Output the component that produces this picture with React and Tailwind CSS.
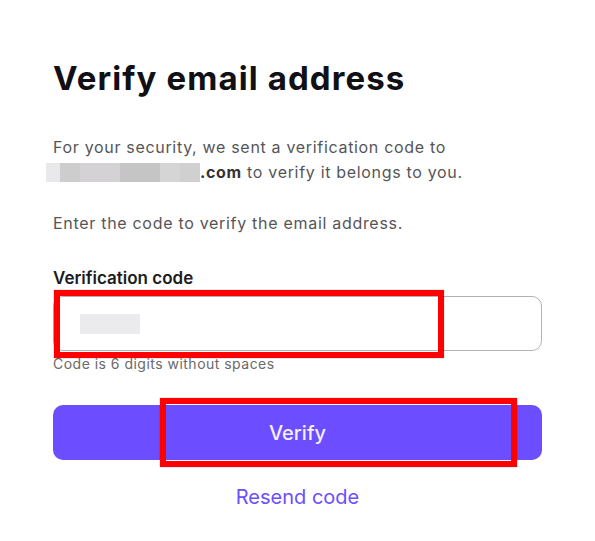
import React from "react";

export default function App() {
  return (
    <div
      className="relative w-[595px] h-[541px] bg-white overflow-hidden"
      style={{ fontFamily: "Inter, 'Liberation Sans', sans-serif" }}
    >
      <div className="flex flex-col px-[53px] pt-[59px]">
        <h1 className="text-[33px] leading-[38px] font-bold text-[#101015] tracking-[1.1px]">
          Verify email address
        </h1>

        <p className="mt-[38px] text-[16px] leading-[25px] text-[#555558] tracking-[0.68px]">
          For your security, we sent a verification code to
          <br />
          <span className="relative inline-flex align-middle -ml-[7px] h-[19px] -mt-[3px]">
            <span className="w-[14px] h-full bg-[#e9e9eb]" />
            <span className="w-[20px] h-full bg-[#cdcdcd]" />
            <span className="w-[40px] h-full bg-[#d4d2d4]" />
            <span className="w-[40px] h-full bg-[#c5c5c5]" />
            <span className="w-[20px] h-full bg-[#d5d5d5]" />
            <span className="w-[20px] h-full bg-[#d0d0d0]" />
          </span>
          <span className="font-bold text-[#333333]">.com</span> to verify it belongs to you.
        </p>

        <p className="mt-[26px] text-[16px] leading-[25px] text-[#555558] tracking-[0.7px]">
          Enter the code to verify the email address.
        </p>

        <label className="mt-[30px] text-[17px] leading-[24px] font-semibold text-[#1c1c1c]">
          Verification code
        </label>

        <div className="mt-[6px] h-[55px] rounded-[10px] border border-[#b3b3b3] flex items-center pl-[26px]">
          <div className="w-[60px] h-[20px] bg-[#ebebed]" />
        </div>

        <p className="mt-[3px] text-[14px] leading-[20px] text-[#6a6a6a] tracking-[0.48px]">
          Code is 6 digits without spaces
        </p>

        <button className="mt-[31px] h-[55px] rounded-[10px] bg-[#6c4dff] text-[#f3f1ff] text-[20px] font-medium flex items-center justify-center">
          Verify
        </button>

        <div className="mt-[23px] text-center text-[20px] leading-[28px] text-[#6c4dff]">
          Resend code
        </div>
      </div>

      {/* annotation overlays */}
      <div className="absolute left-[54px] top-[290px] w-[390px] h-[68px] border-[6px] border-[#ff0000] shadow-[0_0_1px_rgba(0,0,0,0.5)]" />
      <div className="absolute left-[160px] top-[398px] w-[357px] h-[69px] border-[6px] border-[#ff0000] shadow-[0_0_1px_rgba(0,0,0,0.5)]" />
    </div>
  );
}
